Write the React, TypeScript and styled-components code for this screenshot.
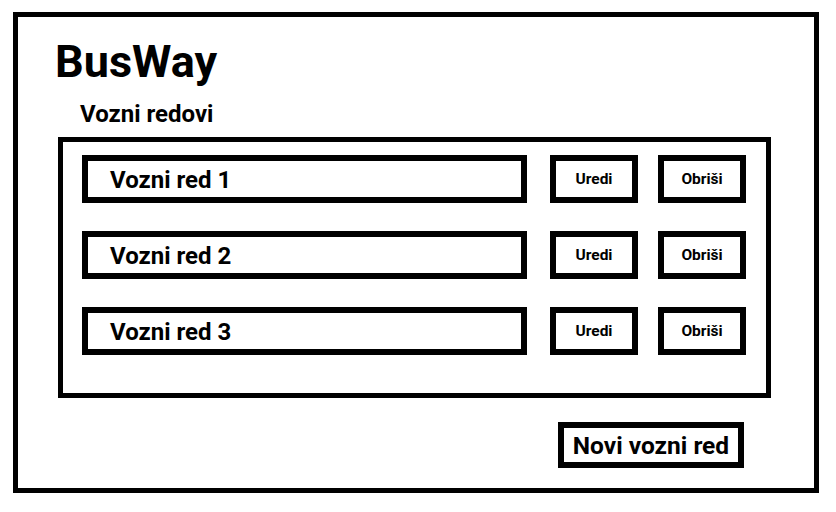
import React from "react";
import styled, { createGlobalStyle } from "styled-components";

const GlobalStyle = createGlobalStyle`
  html, body { margin: 0; padding: 0; background: #fff; }
  body { font-family: Roboto, "Noto Sans", sans-serif; color: #000; }
  * { box-sizing: border-box; }
`;

const Frame = styled.div`
  margin: 12px 0 0 13px;
  width: 806px;
  height: 481px;
  border: 5px solid #000;
  padding: 22px 43px 0 40px;
  display: flex;
  flex-direction: column;
`;

const Brand = styled.h1`
  margin: 0 0 0 -3px;
  font-size: 45px;
  line-height: 45px;
  font-weight: 700;
`;

const SectionTitle = styled.h2`
  margin: 18px 0 0 22px;
  font-size: 24px;
  line-height: 24px;
  font-weight: 700;
`;

const ListBox = styled.div`
  margin-top: 11px;
  width: 713px;
  height: 261px;
  border: 5px solid #000;
  padding: 13px 20px 0 19px;
  display: flex;
  flex-direction: column;
  gap: 28px;
`;

const Row = styled.div`
  display: flex;
  align-items: center;
  height: 48px;
`;

const NameBox = styled.div`
  width: 445px;
  height: 48px;
  border: 6px solid #000;
  padding: 2px 0 0 22px;
  display: flex;
  align-items: center;
  font-size: 24px;
  font-weight: 700;
`;

const ActionButton = styled.button<{ $gap: number }>`
  margin-left: ${(p) => p.$gap}px;
  width: 88px;
  height: 48px;
  border: 6px solid #000;
  background: #fff;
  padding: 0;
  font-family: Roboto, "Noto Sans", sans-serif;
  font-size: 15.5px;
  font-weight: 700;
  color: #000;
  display: flex;
  align-items: center;
  justify-content: center;
`;

const Footer = styled.div`
  display: flex;
  justify-content: flex-end;
  padding-right: 27px;
  margin-top: 24px;
`;

const NewButton = styled.button`
  width: 186px;
  height: 46px;
  border: 6px solid #000;
  background: #fff;
  padding: 0;
  font-family: Roboto, "Noto Sans", sans-serif;
  font-size: 24.5px;
  font-weight: 700;
  color: #000;
  display: flex;
  align-items: center;
  justify-content: center;
`;

const schedules = ["Vozni red 1", "Vozni red 2", "Vozni red 3"];

export default function App() {
  return (
    <>
      <GlobalStyle />
      <Frame>
        <Brand>BusWay</Brand>
        <SectionTitle>Vozni redovi</SectionTitle>
        <ListBox>
          {schedules.map((s) => (
            <Row key={s}>
              <NameBox>{s}</NameBox>
              <ActionButton $gap={23}>Uredi</ActionButton>
              <ActionButton $gap={20}>Obriši</ActionButton>
            </Row>
          ))}
        </ListBox>
        <Footer>
          <NewButton>Novi vozni red</NewButton>
        </Footer>
      </Frame>
    </>
  );
}
